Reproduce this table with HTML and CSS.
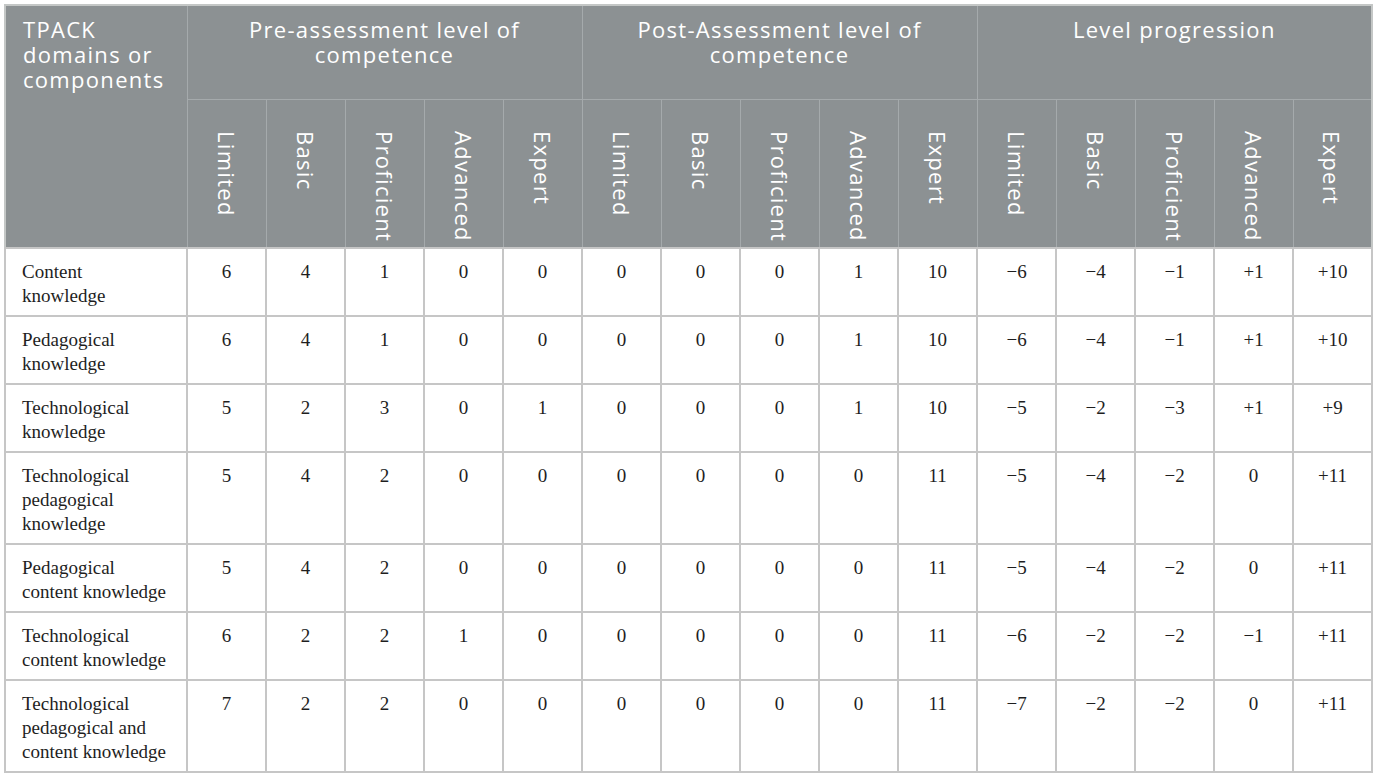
FILE: index.html
```html
<!DOCTYPE html>
<html lang="en">
<head>
    <meta charset="UTF-8">
    <title>TPACK levels of competence</title>
    <link rel="stylesheet" href="styles.css">
</head>
<body>
    <div class="wrap">
        <table class="tpack">
            <colgroup>
                <col class="col-label">
                <col span="15" class="col-num">
            </colgroup>
            <thead>
                <tr class="group-row">
                    <th rowspan="2" class="corner">TPACK domains or components</th>
                    <th colspan="5">Pre-assessment level of competence</th>
                    <th colspan="5">Post-Assessment level of competence</th>
                    <th colspan="5">Level progression</th>
                </tr>
                <tr class="level-row">
                    <th><span>Limited</span></th>
                    <th><span>Basic</span></th>
                    <th><span>Proficient</span></th>
                    <th><span>Advanced</span></th>
                    <th><span>Expert</span></th>
                    <th><span>Limited</span></th>
                    <th><span>Basic</span></th>
                    <th><span>Proficient</span></th>
                    <th><span>Advanced</span></th>
                    <th><span>Expert</span></th>
                    <th><span>Limited</span></th>
                    <th><span>Basic</span></th>
                    <th><span>Proficient</span></th>
                    <th><span>Advanced</span></th>
                    <th><span>Expert</span></th>
                </tr>
            </thead>
            <tbody>
                <tr>
                    <td>Content<br>knowledge</td>
                    <td>6</td><td>4</td><td>1</td><td>0</td><td>0</td>
                    <td>0</td><td>0</td><td>0</td><td>1</td><td>10</td>
                    <td>−6</td><td>−4</td><td>−1</td><td>+1</td><td>+10</td>
                </tr>
                <tr>
                    <td>Pedagogical<br>knowledge</td>
                    <td>6</td><td>4</td><td>1</td><td>0</td><td>0</td>
                    <td>0</td><td>0</td><td>0</td><td>1</td><td>10</td>
                    <td>−6</td><td>−4</td><td>−1</td><td>+1</td><td>+10</td>
                </tr>
                <tr>
                    <td>Technological<br>knowledge</td>
                    <td>5</td><td>2</td><td>3</td><td>0</td><td>1</td>
                    <td>0</td><td>0</td><td>0</td><td>1</td><td>10</td>
                    <td>−5</td><td>−2</td><td>−3</td><td>+1</td><td>+9</td>
                </tr>
                <tr>
                    <td>Technological<br>pedagogical<br>knowledge</td>
                    <td>5</td><td>4</td><td>2</td><td>0</td><td>0</td>
                    <td>0</td><td>0</td><td>0</td><td>0</td><td>11</td>
                    <td>−5</td><td>−4</td><td>−2</td><td>0</td><td>+11</td>
                </tr>
                <tr>
                    <td>Pedagogical<br>content knowledge</td>
                    <td>5</td><td>4</td><td>2</td><td>0</td><td>0</td>
                    <td>0</td><td>0</td><td>0</td><td>0</td><td>11</td>
                    <td>−5</td><td>−4</td><td>−2</td><td>0</td><td>+11</td>
                </tr>
                <tr>
                    <td>Technological<br>content knowledge</td>
                    <td>6</td><td>2</td><td>2</td><td>1</td><td>0</td>
                    <td>0</td><td>0</td><td>0</td><td>0</td><td>11</td>
                    <td>−6</td><td>−2</td><td>−2</td><td>−1</td><td>+11</td>
                </tr>
                <tr>
                    <td>Technological<br>pedagogical and<br>content knowledge</td>
                    <td>7</td><td>2</td><td>2</td><td>0</td><td>0</td>
                    <td>0</td><td>0</td><td>0</td><td>0</td><td>11</td>
                    <td>−7</td><td>−2</td><td>−2</td><td>0</td><td>+11</td>
                </tr>
            </tbody>
        </table>
    </div>
</body>
</html>
```

FILE: styles.css
```css
* {
    box-sizing: border-box;
    margin: 0;
    padding: 0;
}

body {
    background: white;
    padding: 4px 7px 0 4px;
}

.tpack {
    width: 1365px;
    border-collapse: collapse;
    table-layout: fixed;
    border: 2px solid #c4c7c6;
}

.col-label {
    width: 182px;
}

.col-num {
    width: 79px;
}

.tpack thead th {
    background: #8c9193;
    color: white;
    font-family: "Open Sans", sans-serif;
    font-weight: 400;
    font-size: 22px;
    letter-spacing: 1.3px;
    line-height: 25px;
    border: 1px solid #a5aaac;
    vertical-align: top;
}

.group-row th {
    height: 94px;
    padding: 11px 8px 0;
    text-align: center;
}

.group-row th.corner {
    text-align: left;
    padding: 11px 6px 0 17px;
}

.level-row th {
    height: 149px;
    padding-top: 31px;
    text-align: center;
}

.level-row th span {
    display: inline-block;
    writing-mode: vertical-rl;
    line-height: 22px;
}

.tpack tbody td {
    font-family: "Liberation Serif", "Times New Roman", serif;
    font-size: 19px;
    line-height: 24px;
    color: #1e1e1e;
    border: 2px solid #c6c6c6;
    padding: 11px 8px 7px;
    text-align: center;
    vertical-align: top;
}

.tpack tbody td:first-child {
    text-align: left;
    padding-left: 16px;
}
```
